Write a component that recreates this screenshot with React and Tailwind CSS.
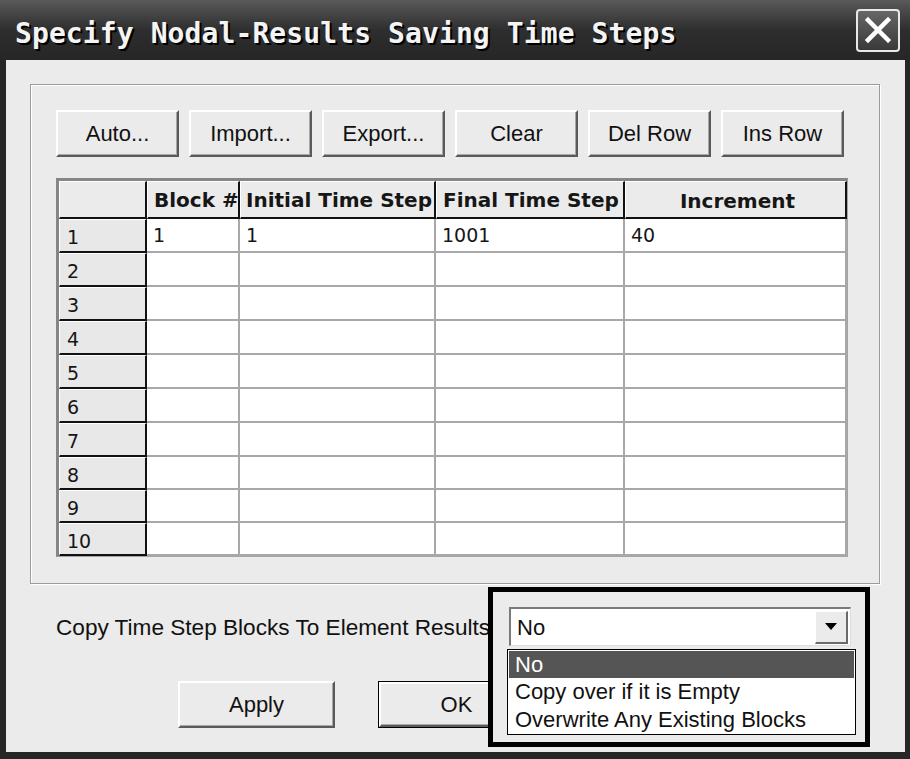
import React from 'react';

const cols = [
  { label: 'Block #', w: 'w-[93px]', pos: 'justify-start pl-[6px]' },
  { label: 'Initial Time Step', w: 'w-[196px]', pos: 'justify-start pl-[5px]' },
  { label: 'Final Time Step', w: 'w-[189px]', pos: 'justify-start pl-[6px]' },
  { label: 'Increment', w: 'w-[222px]', pos: 'justify-center pt-[3px] pl-[4px]' },
];

const rows = [
  ['1', '1', '1001', '40'],
  ['', '', '', ''],
  ['', '', '', ''],
  ['', '', '', ''],
  ['', '', '', ''],
  ['', '', '', ''],
  ['', '', '', ''],
  ['', '', '', ''],
  ['', '', '', ''],
  ['', '', '', ''],
];

const toolButtons = ['Auto...', 'Import...', 'Export...', 'Clear', 'Del Row', 'Ins Row'];

function WinButton({ children, className = '' }) {
  return (
    <button
      className={`flex items-center justify-center bg-[#ebebeb] border-t-2 border-l-2 border-t-white border-l-white border-r-2 border-b-2 border-r-[#5a5a5a] border-b-[#5a5a5a] shadow-[inset_-1px_-1px_0_#a8a8a8] text-[22px] text-[#111] font-['Liberation_Sans',Arial,sans-serif] ${className}`}
    >
      {children}
    </button>
  );
}

export default function App() {
  return (
    <div className="w-[910px] h-[759px] bg-[#262626] flex flex-col overflow-hidden">
      {/* title bar */}
      <div className="h-[60px] shrink-0 flex items-center justify-between pl-[15px] pr-[10px] bg-gradient-to-b from-[#5a5a5a] via-[#2e2e2e] to-[#262626]">
        <span className="text-[28px] font-bold text-[#f4f4f4] tracking-[0.1px] font-['DejaVu_Sans_Mono',monospace] [text-shadow:2px_2px_0_#000] pt-[7px]">
          Specify Nodal-Results Saving Time Steps
        </span>
        <button className="w-[44px] h-[43px] rounded-[4px] border-2 border-[#e8e8e8] bg-gradient-to-b from-[#666] to-[#3a3a3a] flex items-center justify-center">
          <svg width="30" height="30" viewBox="0 0 30 30">
            <path d="M5 5 L25 25 M25 5 L5 25" stroke="#fff" strokeWidth="4.5" strokeLinecap="square" />
          </svg>
        </button>
      </div>

      {/* client area */}
      <div className="flex-1 flex pl-[6px] pr-[5px] pb-[7px]">
        <div className="flex-1 bg-[#ebebeb] relative flex flex-col">
          {/* group panel */}
          <div className="ml-[24px] mt-[24px] w-[850px] h-[500px] border border-[#9c9c9c] shadow-[inset_1px_1px_0_#fff,1px_1px_0_#fff] pl-[25px] pt-[25px]">
            <div className="flex gap-[10px]">
              {toolButtons.map((b) => (
                <WinButton key={b} className="w-[123px] h-[47px]">
                  {b}
                </WinButton>
              ))}
            </div>

            {/* grid */}
            <div className="mt-[21px] w-[792px] border-t-[3px] border-l-[3px] border-r border-b border-t-[#868686] border-l-[#868686] border-r-[#a5a5a5] border-b-[#a5a5a5] bg-white">
              <div className="flex h-[38px]">
                <div className="w-[88px] bg-[#ebebeb] border-t border-l border-t-white border-l-white border-r-2 border-b-2 border-r-[#111] border-b-[#111]" />
                {cols.map((c) => (
                  <div
                    key={c.label}
                    className={`${c.w} ${c.pos} flex items-center bg-[#ebebeb] border-t border-l border-t-white border-l-white border-r-2 border-b-2 border-r-[#111] border-b-[#111] text-[20px] font-bold text-[#161616] font-['DejaVu_Sans',Verdana,sans-serif] whitespace-nowrap`}
                  >
                    {c.label}
                  </div>
                ))}
              </div>
              {rows.map((r, i) => (
                <div key={i} className={`flex ${i < 7 ? 'h-[34px]' : 'h-[33px]'} text-[19px] text-[#161616] font-['DejaVu_Sans',Verdana,sans-serif]`}>
                  <div className="w-[88px] flex items-center pl-[7px] pt-[4px] bg-[#e8e8e8] border-t border-l border-t-white border-l-white border-r-2 border-b-2 border-r-[#111] border-b-[#111]">
                    {i + 1}
                  </div>
                  {cols.map((c, j) => (
                    <div key={j} className={`${c.w} flex items-center pl-[6px] bg-white border-r-2 border-b-2 border-[#a8a8a8]`}>
                      {r[j]}
                    </div>
                  ))}
                </div>
              ))}
            </div>
          </div>

          {/* copy option row */}
          <div className="mt-[22px] ml-[50px] h-[44px] flex items-center text-[22.6px] text-[#111] font-['Liberation_Sans',Arial,sans-serif]">
            Copy Time Step Blocks To Element Results
          </div>

          {/* dialog buttons */}
          <div className="mt-[31px] ml-[172px] flex gap-[43px]">
            <WinButton className="w-[157px] h-[47px]">Apply</WinButton>
            <div className="border border-black">
              <WinButton className="w-[155px] h-[45px]">OK</WinButton>
            </div>
          </div>

          {/* highlighted combo with open list */}
          <div className="absolute left-[482px] top-[527px] w-[382px] h-[160px] border-[5px] border-black bg-[#ebebeb] z-10">
            <div className="ml-[16px] mt-[15px] w-[342px] h-[39px] bg-white border-t-2 border-l-2 border-t-[#7a7a7a] border-l-[#7a7a7a] border-r border-b border-r-[#dcdcdc] border-b-[#dcdcdc] flex items-center justify-between pl-[6px] pr-[2px] text-[22px] text-[#111] font-['Liberation_Sans',Arial,sans-serif]">
              <span>No</span>
              <div className="w-[33px] h-[33px] bg-[#ebebeb] border-t border-l border-t-white border-l-white border-r-2 border-b-2 border-r-[#6a6a6a] border-b-[#6a6a6a] flex items-center justify-center">
                <svg width="12" height="7" viewBox="0 0 12 7">
                  <path d="M0 0 H12 L6 7 Z" fill="#000" />
                </svg>
              </div>
            </div>
            <div className="absolute left-[14px] top-[57px] w-[349px] border border-black bg-white text-[22px] text-[#111] font-['Liberation_Sans',Arial,sans-serif] leading-none p-[1px]">
              <div className="h-[27px] flex items-center pl-[6px] bg-[#555] text-white">No</div>
              <div className="h-[28px] flex items-center pl-[6px]">Copy over if it is Empty</div>
              <div className="h-[27px] flex items-center pl-[6px]">Overwrite Any Existing Blocks</div>
            </div>
          </div>
        </div>
      </div>
    </div>
  );
}
